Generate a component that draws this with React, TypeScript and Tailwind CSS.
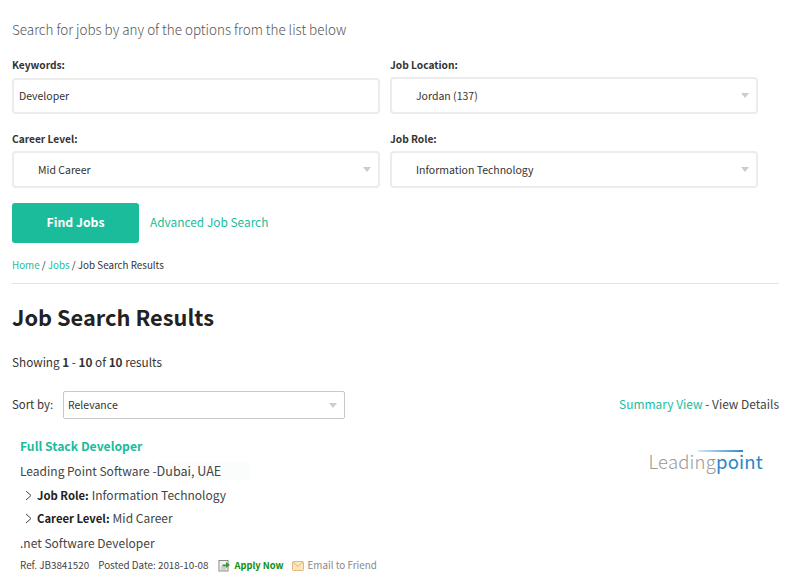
const labelCls = "block text-[10.2px] leading-[16px] font-semibold text-[#333]"

function Select({ value }: { value: string }) {
  return (
    <div className="mt-[4px] flex h-[37px] w-[368px] items-center justify-between rounded-[4px] border-2 border-[#ececec] pl-[24px] pr-[7px] text-[10.5px] text-[#333]">
      <span>{value}</span>
      <span className="h-0 w-0 border-x-[4px] border-t-[5px] border-x-transparent border-t-[#cccccc]" />
    </div>
  )
}

function Chevron() {
  return (
    <svg width="7" height="11" viewBox="0 0 7 11" className="ml-[5px] mr-[5px] block shrink-0">
      <path d="M1 1l5 4.5-5 4.5" fill="none" stroke="#444" strokeWidth="1" />
    </svg>
  )
}

function ApplyIcon() {
  return (
    <svg width="13" height="13" viewBox="0 0 13 13" className="block">
      <rect x="1" y="1.5" width="9" height="10.5" fill="#f2f2f2" stroke="#8a8a8a" />
      <path d="M3 8h5M3 10h5" stroke="#aaa" />
      <path d="M4.5 5.5h3.5V3l4 3-4 3V7.2H4.5z" fill="#3c9a2c" />
    </svg>
  )
}

function MailIcon() {
  return (
    <svg width="12" height="10" viewBox="0 0 12 10" className="block">
      <rect x="0.5" y="0.5" width="11" height="9" rx="1" fill="#fbe6bd" stroke="#e3b878" />
      <path d="M1 1l5 4.5L11 1" fill="none" stroke="#e3b878" />
    </svg>
  )
}

export default function App() {
  return (
    <div className="h-[579px] w-[788px] overflow-hidden bg-white pl-[12px] pr-[9px] font-['Noto_Sans_CJK_SC','Noto_Sans',sans-serif] text-[#333]">
      <p className="pt-[19px] text-[13.45px] leading-[20px] font-light text-[#555]">
        Search for jobs by any of the options from the list below
      </p>

      <div className="mt-[18px] grid w-[746px] grid-cols-[368px_368px] gap-x-[10px]">
        <div>
          <label className={labelCls}>Keywords:</label>
          <div className="mt-[5px] flex h-[36px] items-center rounded-[4px] border-2 border-[#ececec] pl-[5px] text-[10.5px] text-[#333]">
            Developer
          </div>
        </div>
        <div>
          <label className={labelCls}>Job Location:</label>
          <Select value="Jordan (137)" />
        </div>
        <div className="mt-[17px]">
          <label className={labelCls}>Career Level:</label>
          <Select value="Mid Career" />
        </div>
        <div className="mt-[17px]">
          <label className={labelCls}>Job Role:</label>
          <Select value="Information Technology" />
        </div>
      </div>

      <div className="mt-[15px] flex items-center">
        <button className="h-[40px] w-[127px] rounded-[3px] bg-[#1abc9c] pb-[2px] text-[12.25px] font-semibold text-white">
          Find Jobs
        </button>
        <a className="ml-[11px] pb-[2px] text-[11.9px] text-[#1abc9c]">Advanced Job Search</a>
      </div>

      <div className="mt-[14px] text-[9.8px] leading-[16px] text-[#333]">
        <a className="text-[#1abc9c]">Home</a> / <a className="text-[#1abc9c]">Jobs</a> / Job Search Results
      </div>

      <hr className="mt-[10px] border-t border-[#e3e3e3]" />

      <h1 className="mt-[16px] text-[21.8px] leading-[34px] font-semibold text-[#222]">Job Search Results</h1>

      <p className="mt-[19px] text-[11.75px] leading-[18px] text-[#333]">
        Showing <b className="font-semibold">1</b> - <b className="font-semibold">10</b> of{" "}
        <b className="font-semibold">10</b> results
      </p>

      <div className="mt-[20px] flex h-[28px] items-center">
        <span className="w-[41px] text-[11.4px] whitespace-nowrap text-[#333]">Sort by:</span>
        <div className="ml-[10px] flex h-[28px] w-[282px] items-center justify-between rounded-[2px] border border-[#c8c8c8] pl-[4px] pr-[7px] text-[10.5px] text-[#333]">
          <span>Relevance</span>
          <span className="h-0 w-0 border-x-[4px] border-t-[5px] border-x-transparent border-t-[#cccccc]" />
        </div>
        <div className="ml-auto pb-[2px] text-[11.95px] text-[#444]">
          <a className="text-[#1abc9c]">Summary View</a> - View Details
        </div>
      </div>

      <div className="relative pl-[8px]">
        <a className="mt-[18px] block text-[12.2px] leading-[19px] font-semibold text-[#1abc9c]">Full Stack Developer</a>
        <p className="mt-[6px] flex text-[12px] leading-[18px] text-[#444]">
          Leading Point Software -<span className="bg-[#fbfdfc] pr-[29px] text-[12.6px]">Dubai, UAE</span>
        </p>
        <ul className="mt-[6px] text-[12px] leading-[18px] text-[#444]">
          <li className="flex items-center">
            <Chevron />
            <b className="mr-[3px] text-[11.3px] font-semibold text-[#222]">Job Role:</b> Information Technology
          </li>
          <li className="mt-[5px] flex items-center">
            <Chevron />
            <b className="mr-[3px] text-[11.3px] font-semibold text-[#222]">Career Level:</b> Mid Career
          </li>
        </ul>
        <p className="mt-[7px] text-[12px] leading-[18px] text-[#444]">.net Software Developer</p>
        <div className="mt-[6px] flex items-center text-[9.85px] leading-[15px] text-[#444]">
          <span>Ref. JB3841520</span>
          <span className="ml-[9px]">Posted Date: 2018-10-08</span>
          <span className="ml-[10px]"><ApplyIcon /></span>
          <a className="ml-[3px] text-[9.3px] font-semibold text-[#0f8f0f]">Apply Now</a>
          <span className="ml-[8px]"><MailIcon /></span>
          <a className="ml-[4px] text-[#888]">Email to Friend</a>
        </div>

        <div className="absolute right-[16px] top-[10px] flex text-[18.5px] leading-[28px] font-light tracking-[0.2px]">
          <span className="text-[#9a9a9a]">Leading</span>
          <span className="font-normal text-[#2a86c8]">point</span>
          <span className="absolute right-[20px] top-[3px] h-[2px] w-[45px] bg-gradient-to-r from-[#d5e8f5] to-[#2a86c8]" />
        </div>
      </div>
    </div>
  )
}
